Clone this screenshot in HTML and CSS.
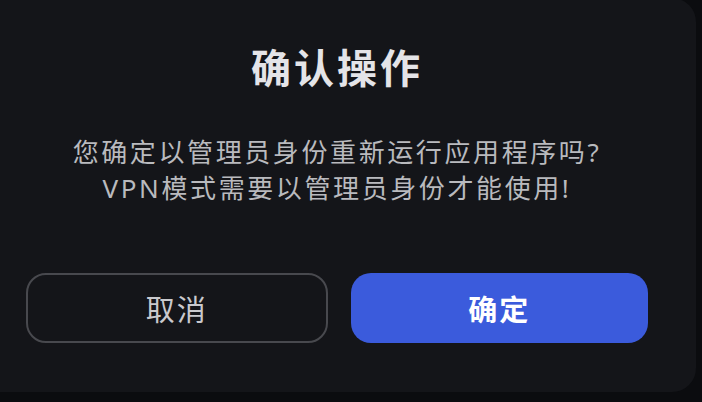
FILE: index.html
```html
<!DOCTYPE html>
<html lang="zh-CN">
<head>
  <meta charset="UTF-8">
  <title>确认操作</title>
  <link rel="stylesheet" href="styles.css">
</head>
<body>
<!-- Finestra di conferma -->
<div class="dialog">
  <h1 class="dialog-title">确认操作</h1>
  <p class="dialog-message">
    您确定以管理员身份重新运行应用程序吗?<br>
    VPN模式需要以管理员身份才能使用!
  </p>
  <div class="dialog-actions">
    <button class="btn btn-cancel">取消</button>
    <button class="btn btn-confirm">确定</button>
  </div>
</div>
</body>
</html>
```

FILE: styles.css
```css
/* Base */
html, body {
  margin: 0;
  height: 100%;
}

body {
  background: #0b0c0f;
  overflow: hidden;
  font-family: "Noto Sans", "Noto Sans CJK SC", sans-serif;
}

/* Dialog */
.dialog {
  width: 718px;
  height: 394px;
  margin: -2px 0 0 -22px;
  box-sizing: border-box;
  padding: 45px 48px 0;
  background: #141519;
  border-radius: 24px;
  display: flex;
  flex-direction: column;
  align-items: center;
}

.dialog-title {
  margin: 0;
  font-size: 40px;
  line-height: 50px;
  font-weight: 700;
  color: #e4e4e8;
  letter-spacing: 3px;
}

.dialog-message {
  margin: 41px 0 0;
  font-size: 26px;
  line-height: 36px;
  color: #b9babe;
  text-align: center;
  letter-spacing: 2.6px;
}

.dialog-actions {
  margin-top: 67px;
  width: 100%;
  display: flex;
  gap: 23px;
}

.btn {
  flex: 1;
  height: 70px;
  border-radius: 20px;
  font-family: inherit;
  font-size: 29px;
  letter-spacing: 2px;
  cursor: pointer;
}

.btn-cancel {
  background: transparent;
  border: 2px solid #48494e;
  color: #c9c9cd;
}

.btn-confirm {
  background: #3b5bdc;
  border: none;
  color: #ffffff;
  font-weight: 700;
}
```
